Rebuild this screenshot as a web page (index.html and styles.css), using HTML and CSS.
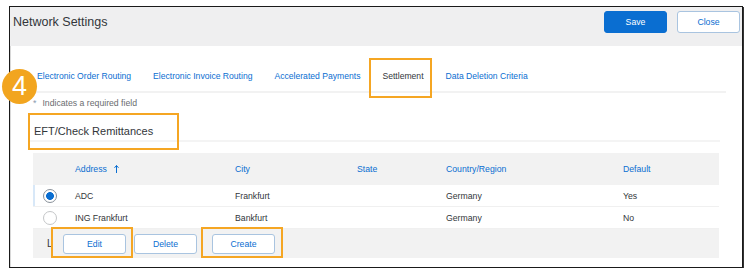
FILE: index.html
```html
<!DOCTYPE html>
<html lang="en">
<head>
  <meta charset="utf-8">
  <title>Network Settings</title>
  <link rel="stylesheet" href="styles.css">
</head>
<body>
  <div class="frame">
    <div class="badge">4</div>
    <div class="header">
      <div class="title">Network Settings</div>
      <button type="button" class="btn-save">Save</button>
      <button type="button" class="btn-close">Close</button>
    </div>
    <div class="content">
      <div class="tabs">
        <span class="tab">Electronic Order Routing</span>
        <span class="tab">Electronic Invoice Routing</span>
        <span class="tab">Accelerated Payments</span>
        <span class="tab tab-active mark-tab">Settlement</span>
        <span class="tab">Data Deletion Criteria</span>
      </div>
      <div class="required"><span class="star">*</span>Indicates a required field</div>
      <div class="section-title">EFT/Check Remittances</div>
      <div class="tbl">
        <div class="row row-head">
          <div></div>
          <div>Address
            <svg class="sort" width="5" height="8" viewBox="0 0 5 8"><path d="M2.5 0.5 V8 M0.5 2.8 L2.5 0.5 L4.5 2.8" fill="none" stroke="#0a6ed1" stroke-width="1"/></svg>
          </div>
          <div>City</div>
          <div>State</div>
          <div>Country/Region</div>
          <div>Default</div>
        </div>
        <div class="row row-data row-selected">
          <div><span class="radio radio-on"></span></div>
          <div>ADC</div>
          <div>Frankfurt</div>
          <div></div>
          <div>Germany</div>
          <div>Yes</div>
        </div>
        <div class="row row-data">
          <div><span class="radio"></span></div>
          <div>ING Frankfurt</div>
          <div>Bankfurt</div>
          <div></div>
          <div>Germany</div>
          <div>No</div>
        </div>
        <div class="toolbar">
          <span class="lbl">L</span>
          <button type="button" class="btn mark-edit">Edit</button>
          <button type="button" class="btn">Delete</button>
          <button type="button" class="btn btn-create mark-create">Create</button>
        </div>
      </div>
    </div>
  </div>
</body>
</html>
```

FILE: styles.css
```css
body {
  margin: 0;
  font-family: "Liberation Sans", Arial, sans-serif;
  color: #32363a;
  background: #fff;
}
.frame {
  position: relative;
  box-sizing: border-box;
  width: 734px;
  height: 262px;
  margin: 6px 0 0 9px;
  border: 1px solid #1a1a1a;
  box-shadow: 1px 1px 0 #333, inset 1px 0 0 #d8d8d8;
  background: #fff;
}
.badge {
  position: absolute;
  left: -8px;
  top: 62px;
  width: 35px;
  height: 35px;
  border-radius: 50%;
  background: #f2a51f;
  color: #fff;
  font-size: 27px;
  line-height: 35px;
  text-align: center;
  z-index: 2;
}
.header {
  display: flex;
  align-items: flex-start;
  box-sizing: border-box;
  height: 39px;
  padding: 4px 2px 0 3px;
  background: #efeff0;
}
.title {
  font-size: 12.5px;
  line-height: 22px;
  margin-right: auto;
}
.header button {
  width: 63px;
  height: 22px;
  border-radius: 3px;
  font-family: inherit;
  font-size: 8.7px;
  padding: 0;
}
.btn-save {
  background: #0a6ed1;
  border: 1px solid #0a6ed1;
  color: #fff;
  margin-right: 10px;
}
.btn-close {
  background: #fff;
  border: 1px solid #a9c4e0;
  color: #0a6ed1;
}
.content {
  padding: 0 16px 0 3px;
}
.tabs {
  display: flex;
  gap: 22px;
  padding: 24px 0 9px 24px;
  border-bottom: 2px solid #f2f2f2;
  font-size: 8.6px;
  line-height: 12px;
}
.tab {
  color: #0a6ed1;
  position: relative;
}
.tab-active {
  color: #32363a;
}
.mark-tab::after {
  content: "";
  position: absolute;
  left: -13px;
  right: -8px;
  top: -12px;
  bottom: -16px;
  border: 2px solid #f5a623;
}
.required {
  margin-top: 4px;
  padding-left: 20px;
  font-size: 8.7px;
  line-height: 12px;
  color: #6a6d70;
}
.star {
  color: #8b9bb0;
  margin-right: 6px;
}
.section-title {
  position: relative;
  margin: 14px 6px 0 15px;
  padding: 0 0 1px 6px;
  border-bottom: 2px solid #f4f4f4;
  font-size: 11px;
  line-height: 16px;
}
.section-title::after {
  content: "";
  position: absolute;
  left: 0;
  top: -10px;
  width: 147px;
  height: 33px;
  border: 2px solid #f5a623;
}
.tbl {
  margin: 11px 7px 0 20px;
  font-size: 8.7px;
}
.row {
  display: grid;
  grid-template-columns: 42px 160px 122px 89px 177px 1fr;
  align-items: center;
}
.row-head {
  height: 32px;
  background: #f2f2f2;
  color: #0a6ed1;
}
.sort {
  margin-left: 5px;
  vertical-align: -1px;
}
.row-data {
  box-sizing: border-box;
  height: 22px;
  border-bottom: 1px solid #f0f0f0;
}
.row-selected {
  box-shadow: inset 2px 0 0 #d8e8f8;
}
.radio {
  display: block;
  box-sizing: border-box;
  width: 14px;
  height: 14px;
  margin-left: 10px;
  border: 1px solid #c4c6c8;
  border-radius: 50%;
  background: #fff;
}
.radio-on {
  border-color: #89919a;
  background: radial-gradient(circle, #0a6ed1 3.6px, #fff 4.2px);
}
.toolbar {
  display: flex;
  align-items: center;
  height: 29px;
  padding-left: 14px;
  background: #f2f2f2;
}
.lbl {
  width: 16px;
  font-size: 10px;
}
.btn {
  position: relative;
  width: 63px;
  height: 20px;
  margin-right: 8px;
  padding: 0;
  border: 1px solid #a9c4e0;
  border-radius: 3px;
  background: #fff;
  color: #0a6ed1;
  font-family: inherit;
  font-size: 8.7px;
}
.btn-create {
  margin-left: 7px;
}
.mark-edit::after,
.mark-create::after {
  content: "";
  position: absolute;
  top: -8px;
  bottom: -5px;
  border: 2px solid #f5a623;
}
.mark-edit::after {
  left: -13px;
  right: -8px;
}
.mark-create::after {
  left: -12px;
  right: -9px;
}
```
